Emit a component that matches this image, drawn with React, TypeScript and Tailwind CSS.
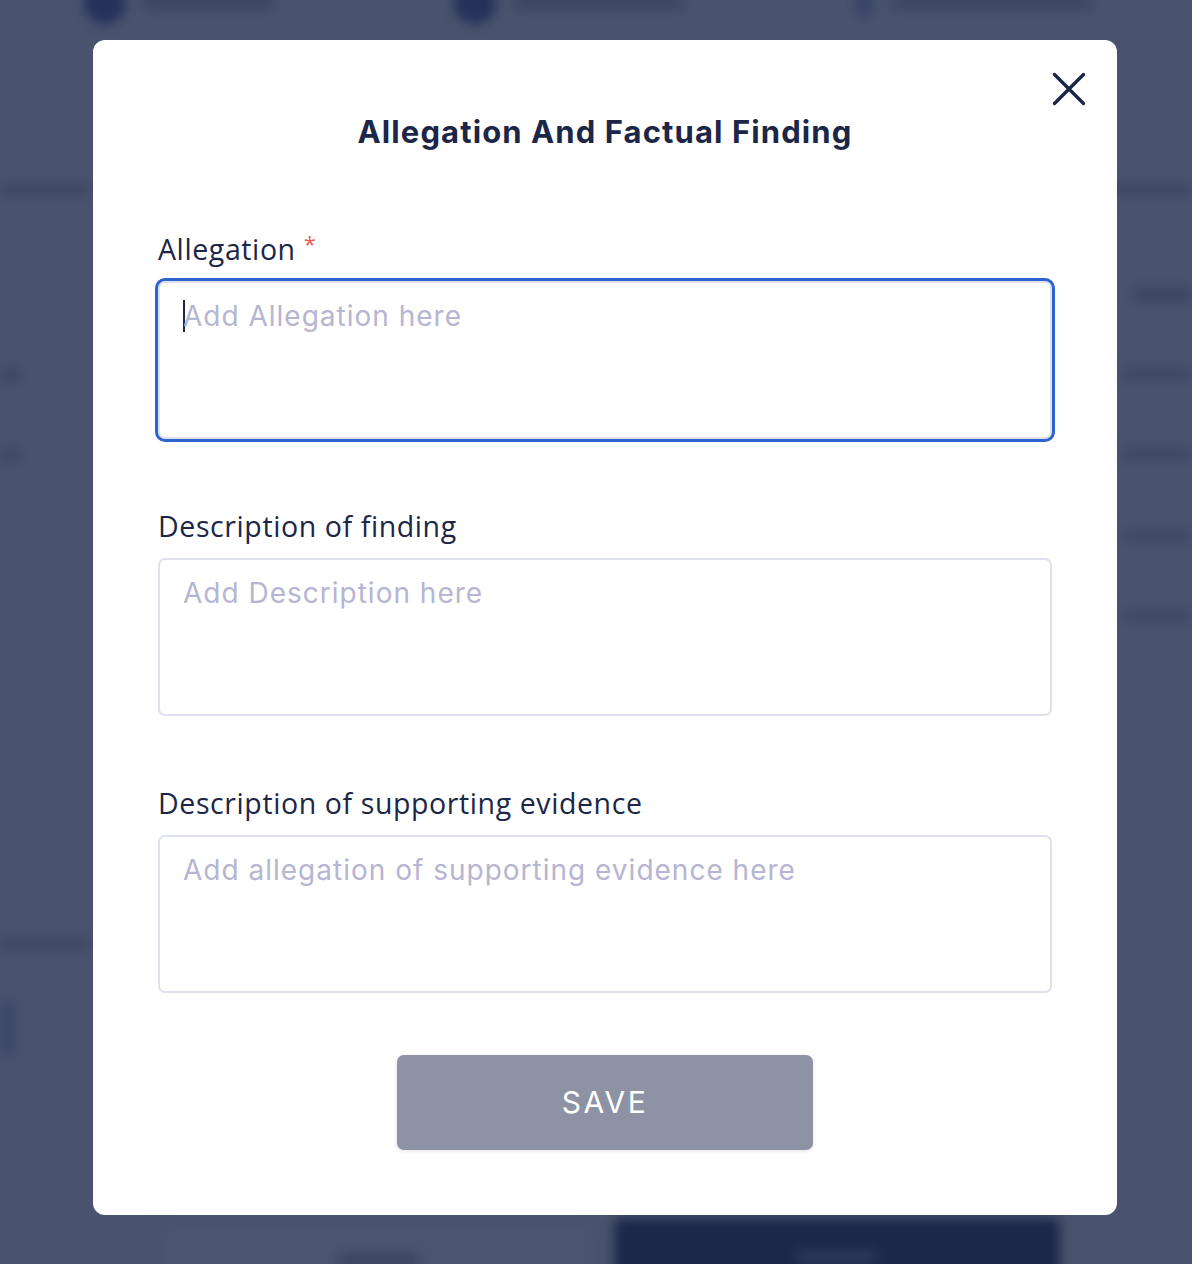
import React from "react";

const navy = "text-[#1c2647]";

function Field({ label, placeholder, required, focused }: { label: string; placeholder: string; required?: boolean; focused?: boolean }) {
  return (
    <div className="flex flex-col">
      <div className={`h-[32px] flex items-center text-[28.5px] leading-none tracking-[0.6px] ${navy}`} style={{ fontFamily: "'Open Sans', sans-serif" }}>
        <span>{label}</span>
        {required && <span className="ml-[8px] text-[#ea5b57] text-[22px] relative -top-[6px]">*</span>}
      </div>
      <div className="mt-[16px]">
        <div
          className={
            focused
              ? "h-[158px] rounded-[7px] border-2 border-[#dfe1ef] outline-[3px] outline-solid outline-[#2d63cf]"
              : "h-[158px] rounded-[7px] border-2 border-[#dfe1ef]"
          }
          style={focused ? { outlineOffset: "0px" } : undefined}
        >
          <div className="pl-[23px] pt-[14px] flex items-center text-[28px] leading-[38px] text-[#b6b5d2] tracking-[1px]" style={{ fontFamily: "Inter, sans-serif" }}>
            {focused && <span className="w-[2px] h-[32px] bg-[#1c2647] -mr-[2px]" />}
            <span>{placeholder}</span>
          </div>
        </div>
      </div>
    </div>
  );
}

function Background() {
  return (
    <div className="absolute inset-0 blur-[6px]">
      {/* stepper */}
      <div className="flex items-center h-[30px] -mt-[12px]">
        <div className="ml-[84px] w-[42px] h-[42px] rounded-full bg-[#26305a]" />
        <div className="ml-[18px] w-[130px] h-[14px] rounded bg-[#3b4462]" />
        <div className="ml-[180px] w-[42px] h-[42px] rounded-full bg-[#26305a]" />
        <div className="ml-[18px] w-[170px] h-[14px] rounded bg-[#3b4462]" />
        <div className="ml-[170px] w-[20px] h-[30px] rounded-full bg-[#3a4466]" />
        <div className="ml-[18px] w-[200px] h-[14px] rounded bg-[#3b4462]" />
      </div>
      <div className="mt-[166px] flex justify-between">
        <div className="w-[90px] h-[12px] bg-[#3d4664]" />
        <div className="w-[80px] h-[12px] bg-[#3d4664]" />
      </div>
      <div className="mt-[90px] flex justify-end">
        <div className="w-[60px] h-[16px] bg-[#3d4664]" />
      </div>
      <div className="mt-[66px] flex justify-between">
        <div className="w-[22px] h-[14px] bg-[#3e4765]" />
        <div className="w-[70px] h-[12px] bg-[#3e4765]" />
      </div>
      <div className="mt-[66px] flex justify-between">
        <div className="w-[20px] h-[14px] bg-[#3e4765]" />
        <div className="w-[70px] h-[12px] bg-[#3e4765]" />
      </div>
      <div className="mt-[68px] flex justify-end">
        <div className="w-[70px] h-[12px] bg-[#3e4765]" />
      </div>
      <div className="mt-[68px] flex justify-end">
        <div className="w-[70px] h-[12px] bg-[#3e4765]" />
      </div>
      <div className="mt-[316px] flex">
        <div className="w-[90px] h-[12px] bg-[#3d4664]" />
      </div>
      <div className="mt-[50px] flex">
        <div className="w-[16px] h-[56px] bg-[#3e4869]" />
      </div>
      <div className="absolute left-[156px] top-[1222px] w-[444px] h-[60px] rounded-[6px] bg-[#4b5470] border border-[#424b67] flex justify-center pt-[30px]">
        <div className="w-[80px] h-[14px] bg-[#3a4361]" />
      </div>
      <div className="absolute left-[614px] top-[1218px] w-[446px] h-[60px] rounded-[6px] bg-[#1d2749] flex justify-center pt-[32px]">
        <div className="w-[80px] h-[14px] bg-[#2d3759]" />
      </div>
    </div>
  );
}

export default function App() {
  return (
    <div className="relative w-full h-[1264px] overflow-hidden bg-[#4a536d]">
      <Background />
      <div className="relative pt-[40px] flex justify-center">
        <div className="ml-[18px] w-[1024px] h-[1175px] bg-white rounded-[12px] relative px-[65px] pt-[70px]">
          <button className="absolute top-[32px] right-[31px] w-[34px] h-[34px] flex items-center justify-center">
            <svg width="34" height="34" viewBox="0 0 34 34" fill="none" stroke="#1c2647" strokeWidth="3.4" strokeLinecap="round">
              <path d="M2.5 2.5 L31.5 31.5 M31.5 2.5 L2.5 31.5" />
            </svg>
          </button>
          <h2
            className={`text-center text-[31px] leading-[44px] font-bold ${navy} tracking-[1.1px]`}
            style={{ fontFamily: "Inter, sans-serif" }}
          >
            Allegation And Factual Finding
          </h2>
          <div className="pt-[79px] flex flex-col gap-[71px]">
            <Field label="Allegation" placeholder="Add Allegation here" required focused />
            <Field label="Description of finding" placeholder="Add Description here" />
            <Field label="Description of supporting evidence" placeholder="Add allegation of supporting evidence here" />
          </div>
          <div className="mt-[62px] flex justify-center">
            <button
              className="w-[416px] h-[95px] rounded-[7px] bg-[#8d93a5] text-white text-[30px] tracking-[2.5px] shadow-[0_1px_4px_rgba(0,0,0,0.12)]"
              style={{ fontFamily: "Inter, sans-serif" }}
            >
              SAVE
            </button>
          </div>
        </div>
      </div>
    </div>
  );
}
